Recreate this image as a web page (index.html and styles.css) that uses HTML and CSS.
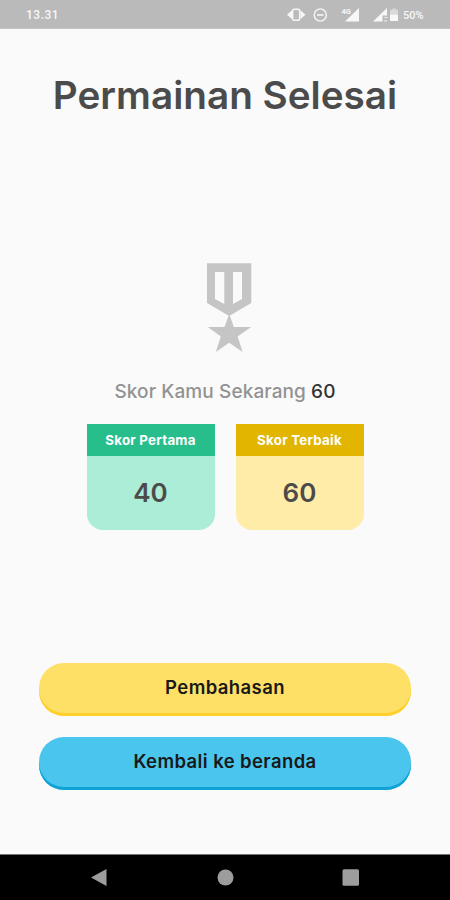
FILE: index.html
```html
<!DOCTYPE html>
<html lang="id">
<head>
<meta charset="utf-8">
<title>Permainan Selesai</title>
<link rel="stylesheet" href="styles.css">
</head>
<body>
<header class="status">
  <span class="time">13.31</span>
  <svg class="status-icons" width="112" height="20" viewBox="287 5 112 20" fill="#f7f7f7">
    <path d="M287 14.700l5-4.400v8.800zM305.500 14.700l-5-4.400v8.800z"/>
    <rect x="292.700" y="9.300" width="7" height="11" rx="1.500" fill="none" stroke="#f7f7f7" stroke-width="1.500"/>
    <circle cx="320.300" cy="15" r="6.100" fill="none" stroke="#f7f7f7" stroke-width="1.400"/>
    <path d="M317 14.200h6.600v1.600H317z"/>
    <text class="network" x="341.500" y="13.500">4G</text>
    <path d="M359 8v13.500h-14z"/>
    <path d="M387 8v7.500h-4.500v6H373z"/>
    <path d="M384.500 17.500h3M384 20.800h3" stroke="#f0f0f0" stroke-width="1"/>
    <path d="M392.300 8.500h3.400v1.200h2.300v5h-8v-5h2.300z" opacity=".5"/>
    <path d="M390 14.500h8V21h-8z"/>
  </svg>
  <span class="battery">50%</span>
</header>
<main class="screen">
  <h1 class="title">Permainan Selesai</h1>
  <svg class="medal" width="46" height="90" viewBox="206 263 46 90" fill="#c5c5c5">
    <path fill-rule="evenodd" d="M207 263.300h44.300V303L229.200 316 207 303zM215 272v27l9.300 5V272zM233 272v32l9-5v-27z"/>
    <path d="M229.200 314l4.700 13h17.200L237.600 336.500l5 15.400-13.400-9.200-13.400 9.200 5-15.400L207.800 327h16.700z"/>
  </svg>
  <p class="current">Skor Kamu Sekarang <span class="current-value">60</span></p>
  <section class="scores">
    <div class="card first">
      <h2 class="card-label">Skor Pertama</h2>
      <div class="card-value">40</div>
    </div>
    <div class="card best">
      <h2 class="card-label">Skor Terbaik</h2>
      <div class="card-value">60</div>
    </div>
  </section>
  <div class="actions">
    <button class="button review">Pembahasan</button>
    <button class="button home">Kembali ke beranda</button>
  </div>
</main>
<nav class="navbar">
  <svg width="18" height="20" viewBox="0 0 18 20"><path d="M0 9.500L15.500 1v17z"/></svg>
  <svg width="18" height="20" viewBox="0 0 18 20"><circle cx="9.500" cy="9.500" r="8"/></svg>
  <svg width="18" height="20" viewBox="0 0 18 20"><rect x="1.500" y="1.200" width="16.500" height="16.500" rx="1.500"/></svg>
</nav>
</body>
</html>
```
FILE: styles.css
```css
* { box-sizing: border-box; margin: 0; }
body {
  width: 450px;
  height: 900px;
  display: flex;
  flex-direction: column;
  overflow: hidden;
  background: #fafafa;
  font-family: Inter, sans-serif;
}
.status {
  height: 29px;
  display: flex;
  align-items: center;
  padding: 2px 25px 0 26px;
  background: #bababa;
  border-bottom: 1px solid #c4c4c4;
  color: #f7f7f7;
  font-family: Roboto, sans-serif;
}
.time { font-size: 12px; font-weight: 500; letter-spacing: .5px; margin-right: auto; }
.network { font: 700 7.500px Roboto, sans-serif; }
.battery { font-size: 11px; font-weight: 500; width: 22px; margin-left: 4px; white-space: nowrap; }
.screen {
  flex: 1;
  display: flex;
  flex-direction: column;
  align-items: center;
}
.title {
  margin-top: 42px;
  font-size: 38.700px;
  font-weight: 600;
  line-height: 48px;
  color: #4b4b4b;
  white-space: nowrap;
}
.medal { margin: 144px 0 0 8px; }
.current {
  margin-top: 27px;
  font-size: 19px;
  font-weight: 500;
  line-height: 24px;
  letter-spacing: .1px;
  color: #929292;
  white-space: nowrap;
}
.current-value { color: #333; }
.scores { display: flex; gap: 21px; margin-top: 20px; }
.card {
  width: 128px;
  height: 106px;
  border-radius: 0 0 16px 16px;
  overflow: hidden;
  text-align: center;
}
.card-label {
  height: 32px;
  font-size: 13.300px;
  font-weight: 700;
  line-height: 33px;
  letter-spacing: .25px;
  color: #fff;
}
.card-value {
  height: 74px;
  font-size: 26px;
  font-weight: 600;
  line-height: 74px;
  color: #4b4b4b;
}
.first { background: #abedd6; }
.first .card-label { background: #27be8c; }
.best { background: #ffeca8; }
.best .card-label { background: #e1b500; }
.actions {
  display: flex;
  flex-direction: column;
  gap: 21px;
  margin-top: 133px;
}
.button {
  width: 372px;
  height: 53px;
  padding: 0 0 5px;
  border: 0;
  border-radius: 25px;
  font: 600 18.500px Inter, sans-serif;
  letter-spacing: .4px;
  color: #191919;
}
.review { background: #ffe066; box-shadow: inset 0 -3px 0 #ffd02b; }
.home { background: #4ac5ed; box-shadow: inset 0 -3px 0 #0fa3d5; }
.navbar {
  height: 46px;
  display: flex;
  justify-content: center;
  align-items: center;
  gap: 107px;
  border-top: 1px solid #777;
  background: #000;
  fill: #9d9d9d;
}
```
